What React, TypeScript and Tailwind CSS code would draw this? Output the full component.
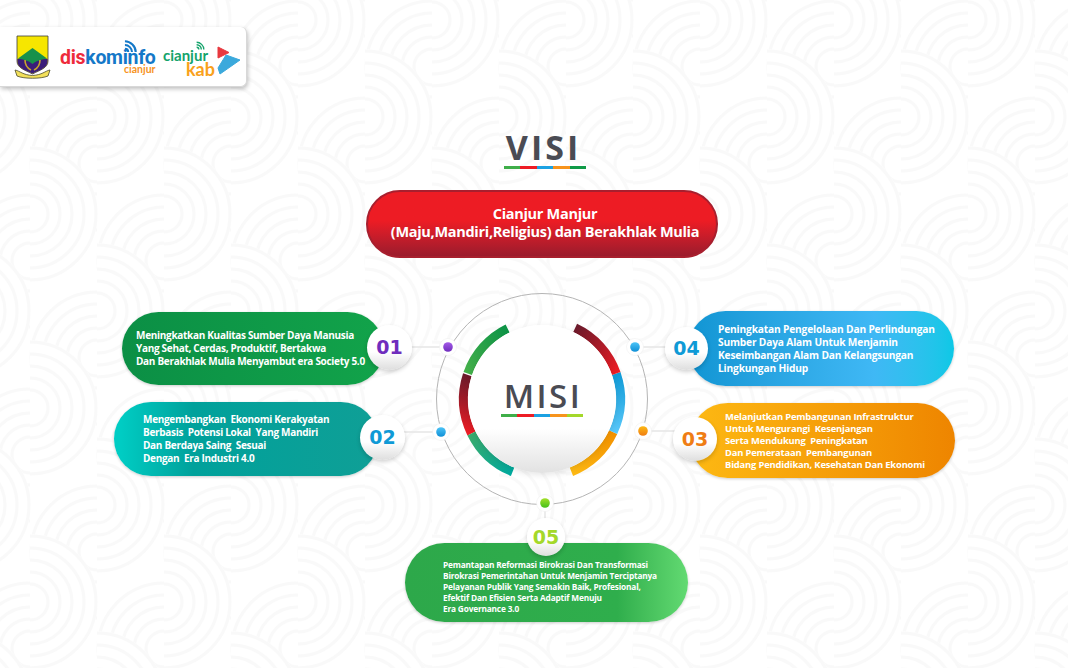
const bodyFont = "font-['Open_Sans','Noto_Sans',sans-serif]"

const misi = [
  {
    box: 'left-[122px] top-[22px] w-[262px] h-[73px] pl-[14px] bg-gradient-to-r from-[#0b8f45] to-[#12a34a]',
    text: 'text-[10px] leading-[13px] tracking-[-0.3px]',
    lines: ['Meningkatkan Kualitas Sumber Daya Manusia', 'Yang Sehat, Cerdas, Produktif, Bertakwa', 'Dan Berakhlak Mulia Menyambut era Society 5.0'],
  },
  {
    box: 'left-[114px] top-[112px] w-[264px] h-[74px] pl-[29px] bg-gradient-to-r from-[#00cdc4] from-[2%] via-[#00a19b] via-[30%] to-[#0f9f96]',
    text: 'text-[10px] leading-[13px] tracking-[-0.3px]',
    lines: ['Mengembangkan  Ekonomi Kerakyatan', 'Berbasis  Potensi Lokal  Yang Mandiri', 'Dan Berdaya Saing  Sesuai', 'Dengan  Era Industri 4.0'],
  },
  {
    box: 'left-[688px] top-[21px] w-[266px] h-[75px] pl-[30px] bg-gradient-to-r from-[#0f95d3] via-[#3fb8f5] via-[70%] to-[#0cc8e6]',
    text: 'text-[10.2px] leading-[13px] tracking-[-0.17px]',
    lines: ['Peningkatan Pengelolaan Dan Perlindungan', 'Sumber Daya Alam Untuk Menjamin', 'Keseimbangan Alam Dan Kelangsungan', 'Lingkungan Hidup'],
  },
  {
    box: 'left-[690px] top-[113px] w-[265px] h-[75px] pl-[35px] bg-gradient-to-r from-[#fdb913] to-[#ee8500]',
    text: 'text-[9.4px] leading-[12px] tracking-[-0.17px]',
    lines: ['Melanjutkan Pembangunan Infrastruktur', 'Untuk Mengurangi  Kesenjangan', 'Serta Mendukung  Peningkatan', 'Dan Pemerataan  Pembangunan', 'Bidang Pendidikan, Kesehatan Dan Ekonomi'],
  },
  {
    box: 'left-[405px] top-[253px] w-[283px] h-[79px] pl-[38px] pt-[7px] bg-gradient-to-r from-[#2da84a] via-[#2fae4c] via-[75%] to-[#62da72]',
    text: 'text-[8.3px] leading-[11px] tracking-[-0.18px]',
    lines: ['Pemantapan Reformasi Birokrasi Dan Transformasi', 'Birokrasi Pemerintahan Untuk Menjamin Terciptanya', 'Pelayanan Publik Yang Semakin Baik, Profesional,', 'Efektif Dan Efisien Serta Adaptif Menuju', 'Era Governance 3.0'],
  },
]

const badges = [
  { no: '01', box: 'left-[367px] top-[35px] w-[45px] h-[45px] text-[#6f2dbd]' },
  { no: '02', box: 'left-[360px] top-[125px] w-[45px] h-[45px] text-[#0f9ad6]' },
  { no: '04', box: 'left-[665px] top-[37px] w-[43px] h-[43px] text-[#0f9ad6]' },
  { no: '03', box: 'left-[673px] top-[127px] w-[44px] h-[44px] text-[#ef7d14]' },
  { no: '05', box: 'left-[527px] top-[228px] w-[38px] h-[38px] text-[#a4d82a]' },
]

const arcs = [
  { id: 'a1', from: 289, to: 334, c1: '#45b04a', c2: '#0d9447' },
  { id: 'a2', from: 244, to: 288, c1: '#ed1c24', c2: '#6b1a2b' },
  { id: 'a3', from: 202, to: 244, c1: '#00a99d', c2: '#3aab6c' },
  { id: 'a4', from: 115, to: 158, c1: '#f39200', c2: '#fdb913' },
  { id: 'a5', from: 71, to: 115, c1: '#0f9ad6', c2: '#5ac8fa' },
  { id: 'a6', from: 25, to: 71, c1: '#6b1a2b', c2: '#ed1c24' },
]

const dots = [
  { x: 448, y: 347, c1: '#a45be8', c2: '#6f2dbd' },
  { x: 635, y: 347, c1: '#4cc4f7', c2: '#0f8fd6' },
  { x: 441, y: 432, c1: '#4cc4f7', c2: '#0f8fd6' },
  { x: 643, y: 431, c1: '#fdb913', c2: '#ef7d14' },
  { x: 545, y: 503, c1: '#a4e02a', c2: '#45c01c' },
]

function pt(deg: number, r = 78.5) {
  const a = (deg * Math.PI) / 180
  return { x: 542 + r * Math.sin(a), y: 399 - r * Math.cos(a) }
}

function ColorBar({ colors }: { colors: string[] }) {
  return (
    <div className="flex h-[3px] w-[82px]">
      {colors.map((c, i) => (
        <div key={i} className={`flex-1 ${c}`} />
      ))}
    </div>
  )
}

function Wifi({ x, y, size, color }: { x: number; y: number; size: number; color: string }) {
  return (
    <svg className="absolute" style={{ left: x, top: y }} width={size} height={size} viewBox="0 0 16 16" fill="none" stroke={color} strokeWidth="2.2">
      <path d="M1 3.5C7 3.5 12.5 9 12.5 15" />
      <path d="M1 7.5C5 7.5 8.5 11 8.5 15" />
      <path d="M1 11.5C3 11.5 4.5 13 4.5 15" />
    </svg>
  )
}

function Crest() {
  return (
    <svg className="absolute left-[14px] top-[8px]" width="37" height="44" viewBox="0 0 37 44">
      <path d="M3 1H34V26C34 33 26 35 18.5 39C11 35 3 33 3 26Z" fill="#f6e600" stroke="#3c3c3c" strokeWidth="0.8" />
      <path d="M3.4 24V26C3.4 33 11 35 18.5 38.6C26 35 33.6 33 33.6 26V24C26 22 11 22 3.4 24Z" fill="#3b1d7a" />
      <path d="M4 23.5L18.5 13L33 23.5C26 25 22 26 18.5 29C15 26 11 25 4 23.5Z" fill="#17914b" />
      <path d="M11 25C11 30 13 33 17 35M26 25C26 30 24 33 20 35" stroke="#c9a52c" strokeWidth="1.6" fill="none" />
      <path d="M1 35C6 36 9 40 18.5 40.5C28 40 31 36 36 35L34 41C27 44 10 44 3 41Z" fill="#f3e05a" stroke="#4a4a2a" strokeWidth="0.8" />
    </svg>
  )
}

function LogoCard() {
  return (
    <div className="relative h-[60px] w-[247px] rounded-r-md border-b border-r border-[#d8d8d8] bg-white shadow-[1px_2px_4px_rgba(0,0,0,0.25)]">
      <Crest />
      <div className="absolute left-[60px] top-[24px] font-['Roboto',sans-serif] text-[19.5px] font-bold leading-[14px] tracking-[-0.3px]">
        <span className="text-[#ee2b3b]">dis</span>
        <span className="text-[#1478c8]">kominfo</span>
      </div>
      <Wifi x={124} y={11} size={15} color="#1478c8" />
      <div className="absolute left-[124px] top-[38px] font-['Lato',sans-serif] text-[10.5px] font-bold leading-[8px] text-[#f7931e]">cianjur</div>
      <div className="absolute left-[163px] top-[21px] font-['Lato',sans-serif] text-[15px] font-bold leading-[14px] text-[#14a36b]">cianjur</div>
      <div className="absolute left-[186px] top-[35px] font-['Lato',sans-serif] text-[18px] font-bold leading-[14px] text-[#f9a11b]">kab</div>
      <Wifi x={196} y={13} size={10} color="#14a36b" />
      <svg className="absolute left-[214px] top-[17px]" width="28" height="32" viewBox="0 0 28 32">
        <path d="M4 3L15 8.5L4 14Z" fill="#e8393f" stroke="#e8393f" strokeLinejoin="round" />
        <path d="M12 11L26 16L6 30L4 24Z" fill="#3ba9dc" stroke="#3ba9dc" strokeLinejoin="round" />
      </svg>
    </div>
  )
}

// faint interlocking half-ring motif, white discs hide what lies under them
function Background() {
  const radii = [18, 30, 42, 54, 66]
  const half = (cx: number, cy: number, right: boolean) => (
    <g key={`${cx}-${cy}`}>
      <path d={`M${cx} ${cy - 68}A68 68 0 0 ${right ? 1 : 0} ${cx} ${cy + 68}Z`} fill="#ffffff" stroke="none" />
      {radii.map(r => (
        <path key={r} d={`M${cx} ${cy - r}A${r} ${r} 0 0 ${right ? 1 : 0} ${cx} ${cy + r}`} />
      ))}
    </g>
  )
  const items = []
  for (let row = -1; row < 3; row++) {
    for (let col = -1; col < 3; col++) {
      const odd = row % 2 !== 0
      const x = col * 134 + (odd ? 67 : 0)
      const y = row * 97
      items.push(half(x, y + 47, false))
      items.push(half(x, y, true))
    }
  }
  return (
    <svg className="absolute inset-0" width="1068" height="668" aria-hidden="true">
      <defs>
        <pattern id="waves" width="134" height="194" patternUnits="userSpaceOnUse" x="30" y="20">
          <g fill="none" stroke="#f9f9f9" strokeWidth="3">
            {items}
          </g>
        </pattern>
      </defs>
      <rect width="1068" height="668" fill="url(#waves)" />
    </svg>
  )
}

function DiagramLines() {
  return (
    <svg className="absolute left-0 top-0" width="1068" height="378" viewBox="0 290 1068 378" fill="none">
      <defs>
        {arcs.map(a => {
          const s = pt(a.from)
          const e = pt(a.to)
          return (
            <linearGradient key={a.id} id={a.id} gradientUnits="userSpaceOnUse" x1={s.x} y1={s.y} x2={e.x} y2={e.y}>
              <stop offset="0" stopColor={a.c1} />
              <stop offset="1" stopColor={a.c2} />
            </linearGradient>
          )
        })}
        {dots.map((d, i) => (
          <linearGradient key={i} id={`dot${i}`} x1="0" y1="0" x2="0" y2="1">
            <stop offset="0" stopColor={d.c1} />
            <stop offset="1" stopColor={d.c2} />
          </linearGradient>
        ))}
      </defs>
      <g stroke="#e6e6e6" strokeWidth="1.5">
        <path d="M410 347H445" />
        <path d="M402 432H440" />
        <path d="M638 347H668" />
        <path d="M646 431H676" />
        <path d="M545 506V520" />
      </g>
      <circle cx="542" cy="399" r="105.5" stroke="#b5b5b5" strokeWidth="1" />
      {arcs.map(a => {
        const s = pt(a.from)
        const e = pt(a.to)
        return <path key={a.id} d={`M${s.x} ${s.y}A78.5 78.5 0 0 1 ${e.x} ${e.y}`} stroke={`url(#${a.id})`} strokeWidth="9" />
      })}
      {dots.map((d, i) => (
        <g key={i}>
          <circle cx={d.x} cy={d.y} r="8.5" fill="#ffffff" stroke="#ececec" strokeWidth="0.5" />
          <circle cx={d.x} cy={d.y} r="4.8" fill={`url(#dot${i})`} />
        </g>
      ))}
    </svg>
  )
}

export default function App() {
  return (
    <div className={`relative h-[668px] w-[1068px] overflow-hidden bg-white ${bodyFont}`}>
      <Background />
      <div className="relative pt-[27px]">
        <LogoCard />
        <div className="mt-[41px] flex flex-col items-center pl-[16px]">
          <div className="ml-[6px] flex flex-col items-center">
            <h1 className="pr-[3px] text-[34px] font-bold leading-[38px] tracking-[3px] text-[#4a4b53]">VISI</h1>
            <ColorBar colors={['bg-[#3fae49]', 'bg-[#ed1c24]', 'bg-[#1ba1e2]', 'bg-[#f7941d]', 'bg-[#0f9a47]']} />
          </div>
          <div className="mt-[21px] flex h-[68px] w-[352px] flex-col items-center justify-center rounded-full border-2 border-[#a81f2e] bg-gradient-to-b from-[#ed1c24] from-45% to-[#9b1b2c] pb-[3px] pl-[6px] text-[14.5px] font-bold leading-[18px] tracking-[-0.3px] text-white">
            <div>Cianjur Manjur</div>
            <div>(Maju,Mandiri,Religius) dan Berakhlak Mulia</div>
          </div>
        </div>
        {/* diagram origin is y=290 on the page */}
        <div className="relative mt-[32px] h-[378px] w-[1068px]">
          <DiagramLines />
          <div className="absolute left-[468px] top-[35px] flex h-[148px] w-[148px] flex-col items-center justify-center rounded-full bg-gradient-to-b from-white from-70% to-[#e2e2e2] shadow-[0_2px_6px_rgba(0,0,0,0.1)]">
            <div className="mb-[5px] pl-[2px] pt-[2px] text-[33px] font-semibold leading-[26px] tracking-[2.5px] text-[#4a4b53]">MISI</div>
            <ColorBar colors={['bg-[#3fae49]', 'bg-[#ed1c24]', 'bg-[#1ba1e2]', 'bg-[#f7941d]', 'bg-[#a4d82a]']} />
          </div>
          {misi.map((m, i) => (
            <div key={i} className={`absolute flex flex-col justify-center rounded-full shadow-[0_1px_3px_rgba(0,0,0,0.2)] ${m.box}`}>
              <div className={`whitespace-pre font-bold text-white ${m.text}`}>
                {m.lines.map(l => (
                  <div key={l}>{l}</div>
                ))}
              </div>
            </div>
          ))}
          {badges.map(b => (
            <div key={b.no} className={`absolute flex items-center justify-center rounded-full bg-gradient-to-b from-white from-60% to-[#dedede] font-['DejaVu_Sans',sans-serif] text-[19px] font-bold shadow-[0_2px_4px_rgba(0,0,0,0.18)] ${b.box}`}>
              {b.no}
            </div>
          ))}
        </div>
      </div>
    </div>
  )
}
